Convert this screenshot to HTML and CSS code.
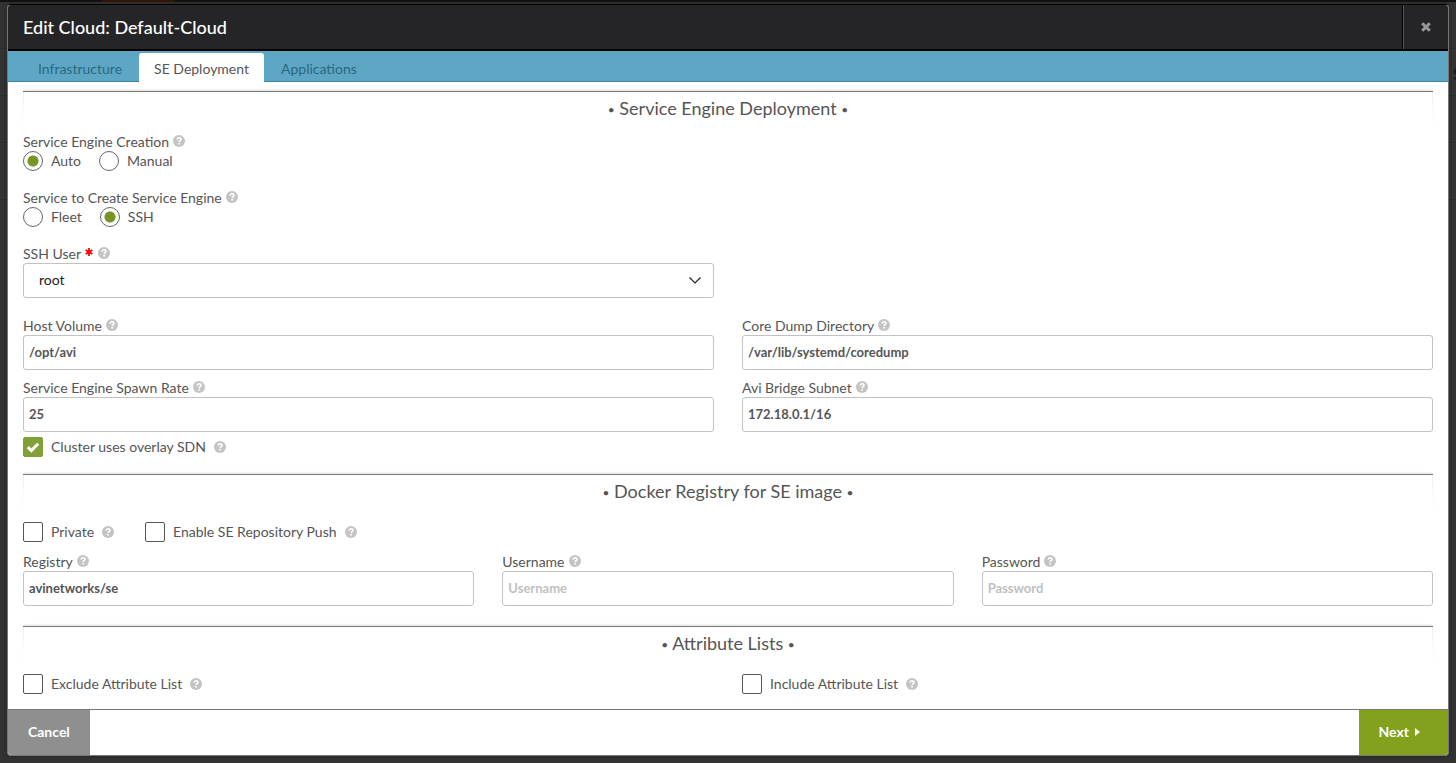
FILE: index.html
```html
<!DOCTYPE html>
<html lang="en">
<head>
<meta charset="utf-8">
<title>Edit Cloud: Default-Cloud</title>
<link rel="stylesheet" href="styles.css">
</head>
<body>
<svg class="defs" aria-hidden="true">
  <symbol id="help" viewBox="0 0 12 12">
    <circle cx="6" cy="6" r="6" fill="#c4c4c4"/>
    <path d="M4.1 4.6C4.2 3.3 5 2.8 6 2.8s1.9.6 1.9 1.6c0 1.2-1.7 1.2-1.7 2.5" fill="none" stroke="#fff" stroke-width="1.6"/>
    <rect x="5.3" y="7.9" width="1.7" height="1.6" fill="#fff"/>
  </symbol>
  <symbol id="check" viewBox="0 0 20 20">
    <path d="M4.8 10.2l3.5 3.4 6.9-6.9" fill="none" stroke="#fff" stroke-width="3"/>
  </symbol>
</svg>
<div class="backdrop" aria-hidden="true">
  <div class="backdrop-bar"></div>
  <div class="backdrop-row"></div>
  <div class="backdrop-row backdrop-title">S</div>
  <div class="backdrop-row"></div>
  <div class="backdrop-row backdrop-tall"></div>
</div>
<main class="modal">
  <header class="header">
    <h1 class="title">Edit Cloud: Default-Cloud</h1>
    <button class="close" type="button" aria-label="Close">
      <svg width="10" height="10" viewBox="0 0 10 10"><path d="M1.2 1.2l7.6 7.6M8.8 1.2L1.2 8.8" stroke="#98989c" stroke-width="3"/></svg>
    </button>
  </header>
  <nav class="tabs">
    <a class="tab" href="#infrastructure">Infrastructure</a>
    <a class="tab active" href="#deployment" aria-current="page">SE Deployment</a>
    <a class="tab" href="#applications">Applications</a>
  </nav>
  <form class="content" id="deployment">
    <section class="section">
      <h2 class="heading"><span class="dot">•</span> Service Engine Deployment <span class="dot">•</span></h2>
      <div class="group" role="radiogroup" aria-labelledby="creation">
        <div class="label" id="creation">Service Engine Creation<svg class="help"><use href="#help"/></svg></div>
        <div class="options">
          <label class="option"><input class="radio" type="radio" name="creation" checked>Auto</label>
          <label class="option"><input class="radio" type="radio" name="creation">Manual</label>
        </div>
      </div>
      <div class="group" role="radiogroup" aria-labelledby="service">
        <div class="label" id="service">Service to Create Service Engine<svg class="help"><use href="#help"/></svg></div>
        <div class="options">
          <label class="option"><input class="radio" type="radio" name="service">Fleet</label>
          <label class="option"><input class="radio" type="radio" name="service" checked>SSH</label>
        </div>
      </div>
      <div class="columns two user-row">
        <div class="field">
          <label class="label" for="user">SSH User<svg class="required" viewBox="0 0 8 8"><path d="M4 0v8M.6 2l6.8 4M.6 6l6.8-4" stroke="#f00" stroke-width="1.8"/></svg><svg class="help"><use href="#help"/></svg></label>
          <div class="select-box">
            <select class="input select" id="user"><option>root</option></select>
            <svg class="chevron" viewBox="0 0 12 7"><path d="M.5.5L6 6 11.500.5" fill="none" stroke="#222" stroke-width="1.2"/></svg>
          </div>
        </div>
      </div>
      <div class="columns two">
        <div class="field">
          <label class="label" for="volume">Host Volume<svg class="help"><use href="#help"/></svg></label>
          <input class="input" id="volume" type="text" value="/opt/avi">
        </div>
        <div class="field">
          <label class="label" for="dump">Core Dump Directory<svg class="help"><use href="#help"/></svg></label>
          <input class="input" id="dump" type="text" value="/var/lib/systemd/coredump">
        </div>
        <div class="field">
          <label class="label" for="rate">Service Engine Spawn Rate<svg class="help"><use href="#help"/></svg></label>
          <input class="input" id="rate" type="text" value="25">
        </div>
        <div class="field">
          <label class="label" for="subnet">Avi Bridge Subnet<svg class="help"><use href="#help"/></svg></label>
          <input class="input" id="subnet" type="text" value="172.18.0.1/16">
        </div>
      </div>
      <div class="overlay-option">
        <label class="option"><span class="checkbox"><input class="box" type="checkbox" checked><svg class="tick"><use href="#check"/></svg></span>Cluster uses overlay SDN<svg class="help wide"><use href="#help"/></svg></label>
      </div>
    </section>
    <section class="section">
      <h2 class="heading"><span class="dot">•</span> Docker Registry for SE image <span class="dot">•</span></h2>
      <div class="checks">
        <label class="option"><span class="checkbox"><input class="box" type="checkbox"><svg class="tick"><use href="#check"/></svg></span>Private<svg class="help wide"><use href="#help"/></svg></label>
        <label class="option"><span class="checkbox"><input class="box" type="checkbox"><svg class="tick"><use href="#check"/></svg></span>Enable SE Repository Push<svg class="help wide"><use href="#help"/></svg></label>
      </div>
      <div class="columns three">
        <div class="field">
          <label class="label" for="registry">Registry<svg class="help"><use href="#help"/></svg></label>
          <input class="input" id="registry" type="text" value="avinetworks/se">
        </div>
        <div class="field">
          <label class="label" for="username">Username<svg class="help"><use href="#help"/></svg></label>
          <input class="input" id="username" type="text" placeholder="Username">
        </div>
        <div class="field">
          <label class="label" for="password">Password<svg class="help"><use href="#help"/></svg></label>
          <input class="input" id="password" type="password" placeholder="Password">
        </div>
      </div>
    </section>
    <section class="section attributes">
      <h2 class="heading"><span class="dot">•</span> Attribute Lists <span class="dot">•</span></h2>
      <div class="checks columns two">
        <label class="option"><span class="checkbox"><input class="box" type="checkbox"><svg class="tick"><use href="#check"/></svg></span>Exclude Attribute List<svg class="help wide"><use href="#help"/></svg></label>
        <label class="option"><span class="checkbox"><input class="box" type="checkbox"><svg class="tick"><use href="#check"/></svg></span>Include Attribute List<svg class="help wide"><use href="#help"/></svg></label>
      </div>
    </section>
  </form>
  <footer class="footer">
    <button class="button cancel" type="button">Cancel</button>
    <button class="button next" type="button">Next<svg width="5" height="8" viewBox="0 0 5 8"><path d="M0 0l5 4-5 4z" fill="#fff"/></svg></button>
  </footer>
</main>
</body>
</html>
```
FILE: styles.css
```css
* {
  box-sizing: border-box;
}

body {
  display: flex;
  min-height: 100vh;
  margin: 0;
  padding: 4px 7px 7px;
  background: #333;
  color: #555;
  font: 14px/18px Lato, sans-serif;
}

.defs {
  position: absolute;
  width: 0;
  height: 0;
}

/* Dimmed page under the dialog */
.backdrop {
  position: absolute;
  inset: 0;
  overflow: hidden;
}

.backdrop-bar {
  height: 2px;
  background: linear-gradient(90deg, #111 102px, #381505 102px 174px, #111 174px);
}

.backdrop-row {
  height: 47px;
  border-bottom: 1px solid #2b2b2b;
}

.backdrop-title {
  padding: 16px 0;
  color: #1a1a1a;
  font-size: 17px;
  font-weight: 700;
  text-align: right;
  margin-right: -6px;
}

.backdrop-tall {
  height: 57px;
}

.modal {
  position: relative;
  display: flex;
  flex: 1;
  flex-direction: column;
  min-width: 0;
  border: 1px solid #777;
  border-top-color: #000;
  border-radius: 4px;
  background: #fff;
  box-shadow: 0 0 4px #222;
  overflow: hidden;
}

.header {
  display: flex;
  justify-content: space-between;
  height: 46px;
  border-bottom: 2px solid #000;
  background: #252528;
}

.title {
  margin: 0;
  padding: 0 15px;
  color: #fff;
  font-size: 18px;
  font-weight: 500;
  line-height: 44px;
}

.close {
  display: flex;
  align-items: center;
  justify-content: center;
  width: 45px;
  padding: 0;
  border: 0;
  border-left: 1px solid #55555a;
  background: none;
  box-shadow: -1px 0 #000;
}

.tabs {
  display: flex;
  align-items: flex-end;
  gap: 2px;
  height: 31px;
  padding-left: 15px;
  background: #5da7c5;
  box-shadow: inset 0 -1px #3a87a6;
}

.tab {
  padding: 7px 15px 4px;
  border-radius: 3px 3px 0 0;
  color: #2b6780;
  text-decoration: none;
}

.tab.active {
  background: #fff;
  color: #555;
}

.content {
  flex: 1;
  padding: 9px 15px 15px;
}

.section + .section {
  margin-top: 17px;
}

.section + .attributes {
  margin-top: 20px;
}

.heading {
  height: 42px;
  margin: 0;
  border-top: 1px solid #777;
  background:
    linear-gradient(#eee, #fff) left top / 1px 26px no-repeat,
    linear-gradient(#eee, #fff) right top / 1px 26px no-repeat;
  box-shadow: 0 -2px 2px -1px #ddd;
  font-size: 18px;
  font-weight: 400;
  line-height: 32px;
  text-align: center;
}

.dot {
  font-size: 12px;
  line-height: 18px;
  vertical-align: 1px;
}

.group {
  margin-bottom: 18px;
}

.user-row {
  margin-bottom: 19px;
}

.label {
  display: flex;
  align-items: center;
  height: 18px;
}

.help {
  width: 12px;
  height: 12px;
  margin: 0 0 2px 4px;
}

.help.wide {
  margin: 0 0 0 8px;
}

.required {
  width: 8px;
  height: 8px;
  margin: 0 1px 4px 4px;
}

.options {
  display: flex;
  gap: 18px;
}

.option {
  display: flex;
  align-items: center;
}

.radio {
  width: 20px;
  height: 20px;
  margin: 0 8px 0 0;
  appearance: none;
  border: 1px solid #666;
  border-radius: 50%;
  background: #fff;
}

.radio:checked {
  background: radial-gradient(circle, #789422 5px, #fff 6px);
}

.checkbox {
  display: grid;
  width: 20px;
  height: 20px;
  margin-right: 8px;
}

.box,
.tick {
  grid-area: 1 / 1;
  width: 20px;
  height: 20px;
  margin: 0;
}

.box {
  appearance: none;
  border: 1px solid #555;
  border-radius: 2px;
}

.box:checked {
  border-color: #82a038;
  background: #82a038;
}

.tick {
  visibility: hidden;
  pointer-events: none;
}

.box:checked + .tick {
  visibility: visible;
}

.columns {
  display: grid;
  gap: 9px 28px;
}

.two {
  grid-template-columns: 1fr 1fr;
}

.three {
  grid-template-columns: 1fr 1fr 1fr;
}

.field {
  min-width: 0;
}

.input {
  display: block;
  width: 100%;
  height: 35px;
  padding: 0 5px 1px;
  border: 1px solid #c2c2c2;
  border-radius: 3px;
  background: #fff;
  color: #555;
  font: 700 13px/18px Lato, sans-serif;
}

.input::placeholder {
  color: #c0c0c0;
}

.select-box {
  display: grid;
  align-items: center;
}

.select {
  grid-area: 1 / 1;
  padding: 0 15px 1px;
  appearance: none;
  color: #222;
  font-size: 14px;
  font-weight: 400;
}

.chevron {
  grid-area: 1 / 1;
  justify-self: end;
  width: 12px;
  height: 7px;
  margin-right: 13px;
  pointer-events: none;
}

.overlay-option {
  display: flex;
  margin-top: 5px;
}

.checks {
  display: flex;
  gap: 31px;
  padding-top: 6px;
  margin-bottom: 11px;
}

.checks.two {
  display: grid;
  gap: 28px;
  margin-bottom: 0;
}

.footer {
  display: flex;
  justify-content: space-between;
  border-top: 1px solid #777;
}

.button {
  display: flex;
  align-items: center;
  gap: 6px;
  height: 45px;
  padding: 0 20px 2px;
  border: 0;
  color: #fff;
  font: 700 14px/18px Lato, sans-serif;
}

.cancel {
  background: #8f8f8f;
}

.next {
  padding-right: 28px;
  background: #83a11c;
}
```
